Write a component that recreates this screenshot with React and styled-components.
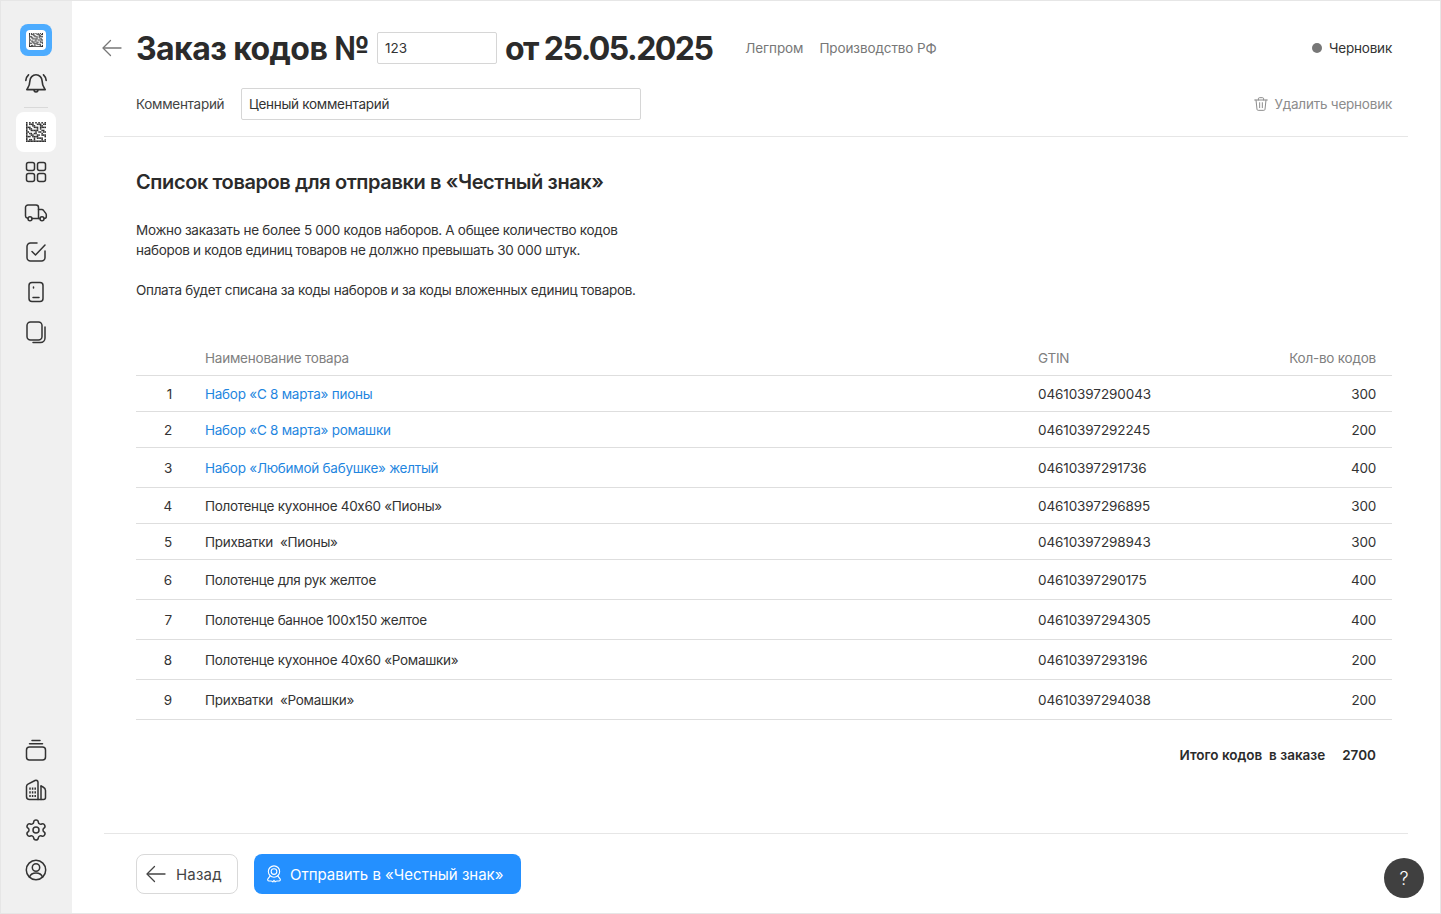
import React from 'react';
import styled, { createGlobalStyle } from 'styled-components';
import { Settings } from 'lucide-react';

const GlobalStyle = createGlobalStyle`
  html, body {
    margin: 0;
    padding: 0;
  }
  body {
    font-family: Inter, "Noto Sans", sans-serif;
    color: #2b2b2b;
    background: #fff;
  }
  * {
    box-sizing: border-box;
  }
`;

const MATRIX = [
  '1010101010101',
  '1011100111011',
  '1000110001100',
  '1110011101111',
  '1011000101000',
  '1001111100110',
  '1100001011011',
  '1011011000100',
  '1001100110111',
  '1110111100001',
  '1000010111100',
  '1011010000101',
  '1111111111111',
];

const DataMatrix = ({ size = 20, color = '#2f2f2f' }) => (
  <svg width={size} height={size} viewBox="0 0 13 13">
    {MATRIX.map((row, y) =>
      row.split('').map((cell, x) =>
        cell === '1' ? <rect key={`${x}-${y}`} x={x} y={y} width="1" height="1" fill={color} /> : null
      )
    )}
  </svg>
);

const Icon = ({ children, size = 24, weight = 1.5 }) => (
  <svg
    width={size}
    height={size}
    viewBox="0 0 24 24"
    fill="none"
    stroke="currentColor"
    strokeWidth={weight}
    strokeLinecap="round"
    strokeLinejoin="round"
  >
    {children}
  </svg>
);

const ArrowIcon = () => (
  <Icon weight={1.3}>
    <path d="M3.500 12H21" />
    <path d="M10.500 4.500 3 12l7.500 7.500" />
  </Icon>
);

const BellIcon = () => (
  <Icon size={26}>
    <path d="M12 3.500a5.600 5.600 0 0 0-5.600 5.600c0 4.400-1.700 6.400-2.900 8.100h17c-1.200-1.700-2.900-3.700-2.900-8.100A5.600 5.600 0 0 0 12 3.500z" />
    <path d="M10.200 17.400c0 2.600 3.600 2.600 3.600 0" />
    <path d="M2.600 8.600c.2-2 1.100-3.700 2.500-5M21.400 8.600c-.2-2-1.100-3.700-2.500-5" />
  </Icon>
);

const GridIcon = () => (
  <Icon>
    <rect x="2.500" y="2.500" width="8" height="8" rx="2" />
    <rect x="13.500" y="2.500" width="8" height="8" rx="2" />
    <rect x="2.500" y="13.500" width="8" height="8" rx="2" />
    <rect x="13.500" y="13.500" width="8" height="8" rx="2" />
  </Icon>
);

const TruckIcon = () => (
  <Icon>
    <g transform="translate(0 1)">
      <path d="M3.800 17.300C2.500 17 1.500 16.200 1.500 15V6.500A2.500 2.500 0 0 1 4 4h8a2.500 2.500 0 0 1 2.500 2.500v11H8" />
      <path d="M14.500 8.500h3.300c.7 0 1.300.3 1.700.9l2.300 3c.3.400.5.900.5 1.400v1.700c0 1.200-.7 2-2 2" />
      <circle cx="6" cy="17.800" r="2" />
      <circle cx="18" cy="17.800" r="2" />
      <path d="M14.500 17.500h1.500" />
    </g>
  </Icon>
);

const CheckIcon = () => (
  <Icon>
    <path d="M13 3H6.500A3.500 3.500 0 0 0 3 6.500v11A3.500 3.500 0 0 0 6.500 21h11a3.500 3.500 0 0 0 3.500-3.500V11" />
    <path d="M8 11.500l3.500 3.500L21 5" />
  </Icon>
);

const PhoneIcon = () => (
  <Icon>
    <rect x="5" y="2.500" width="14" height="19" rx="3" />
    <path d="M9 17.500h6" />
    <path d="M9.500 7v1" />
  </Icon>
);

const CopyIcon = () => (
  <Icon>
    <rect x="3" y="2" width="15" height="18" rx="3.500" />
    <path d="M21 7v11a4.500 4.500 0 0 1-4.500 4.500H9" />
  </Icon>
);

const StackIcon = () => (
  <Icon>
    <rect x="2.500" y="9" width="19" height="13" rx="3" />
    <path d="M5.500 5.800h13" />
    <path d="M8 2.500h8" />
  </Icon>
);

const BuildingIcon = () => (
  <Icon>
    <path d="M2.500 8.500c0-1 .6-1.800 1.500-2.300l7-3.700c1.300-.7 3 .2 3 1.700V21.500H5.500a3 3 0 0 1-3-3z" />
    <path d="M17 8l2 1c1.500.8 2.500 2 2.500 3.500v7a2 2 0 0 1-2 2H14" />
    <path d="M17 8v13.500" />
    <path
      strokeLinecap="butt"
      d="M6 9.500v2.200M8.600 9.500v2.200M11.200 9.500v2.200M6 13.200v2.200M8.600 13.200v2.200M11.200 13.200v2.200M6 16.900v2.200M8.600 16.900v2.200M11.200 16.900v2.200"
    />
  </Icon>
);

const UserIcon = () => (
  <Icon>
    <circle cx="12" cy="12" r="9.700" />
    <circle cx="12" cy="9.500" r="3.700" />
    <path d="M5.500 19c1-2.700 3.500-4 6.500-4s5.500 1.300 6.500 4" />
  </Icon>
);

const TrashIcon = () => (
  <Icon size={16}>
    <path d="M2.500 6h19" />
    <path d="M4.500 6l1.500 14c.1 1 .8 1.500 1.800 1.500h8.400c1 0 1.700-.5 1.800-1.500L19.500 6" />
    <path d="M8 6V4.200C8 3 8.800 2.500 10 2.500h4c1.200 0 2 .5 2 1.700V6" />
    <path d="M10 10v7.500M14 10v7.500" />
  </Icon>
);

const BadgeIcon = () => (
  <Icon size={20} weight={1.3}>
    <circle cx="12" cy="9" r="6.800" />
    <circle cx="12" cy="9" r="3.400" />
    <path d="M7.500 14.200 4.700 17.800c-.8 1.100-.1 2.500 1.200 2.500h2.300c1 0 2 .4 2.500 1.200L12 19.500l1.300 2c.5-.8 1.500-1.200 2.500-1.200h2.300c1.300 0 2-1.400 1.200-2.500l-2.800-3.600" />
  </Icon>
);

const products = [
  { id: 1, name: 'Набор «С 8 марта» пионы', gtin: '04610397290043', count: 300, link: true },
  { id: 2, name: 'Набор «С 8 марта» ромашки', gtin: '04610397292245', count: 200, link: true },
  { id: 3, name: 'Набор «Любимой бабушке» желтый', gtin: '04610397291736', count: 400, link: true, tall: true },
  { id: 4, name: 'Полотенце кухонное 40х60 «Пионы»', gtin: '04610397296895', count: 300 },
  { id: 5, name: 'Прихватки  «Пионы»', gtin: '04610397298943', count: 300 },
  { id: 6, name: 'Полотенце для рук желтое', gtin: '04610397290175', count: 400, tall: true },
  { id: 7, name: 'Полотенце банное 100х150 желтое', gtin: '04610397294305', count: 400, tall: true },
  { id: 8, name: 'Полотенце кухонное 40х60 «Ромашки»', gtin: '04610397293196', count: 200, tall: true },
  { id: 9, name: 'Прихватки  «Ромашки»', gtin: '04610397294038', count: 200, tall: true },
];

export default function App() {
  return (
    <>
      <GlobalStyle />
      <Page>
        <Sidebar>
          <SideGroup>
            <Logo>
              <LogoInner>
                <DataMatrix size={14} />
              </LogoInner>
            </Logo>
            <SideItem><BellIcon /></SideItem>
            <SideDivider />
            <SideItem $active><DataMatrix size={20} /></SideItem>
            <SideItem><GridIcon /></SideItem>
            <SideItem><TruckIcon /></SideItem>
            <SideItem><CheckIcon /></SideItem>
            <SideItem><PhoneIcon /></SideItem>
            <SideItem><CopyIcon /></SideItem>
          </SideGroup>
          <SideGroup>
            <SideItem><StackIcon /></SideItem>
            <SideItem><BuildingIcon /></SideItem>
            <SideItem><Settings size={24} strokeWidth={1.5} /></SideItem>
            <SideItem><UserIcon /></SideItem>
          </SideGroup>
        </Sidebar>

        <Main>
          <Header>
            <TitleRow>
              <BackLink><ArrowIcon /></BackLink>
              <Title>Заказ кодов №</Title>
              <NumberField value="123" readOnly />
              <Title $date>от 25.05.2025</Title>
              <Tags>
                <Tag>Легпром</Tag>
                <Tag>Производство РФ</Tag>
              </Tags>
              <Status>
                <StatusDot />
                Черновик
              </Status>
            </TitleRow>
            <CommentRow>
              <CommentLabel>Комментарий</CommentLabel>
              <CommentField value="Ценный комментарий" readOnly />
              <DeleteDraft><TrashIcon />Удалить черновик</DeleteDraft>
            </CommentRow>
          </Header>

          <Content>
            <SectionTitle>Список товаров для отправки в «Честный знак»</SectionTitle>
            <Note>
              Можно заказать не более 5 000 кодов наборов. А общее количество кодов
              <br />
              наборов и кодов единиц товаров не должно превышать 30 000 штук.
            </Note>
            <Note>Оплата будет списана за коды наборов и за коды вложенных единиц товаров.</Note>

            <Table>
              <HeadRow>
                <span />
                <span>Наименование товара</span>
                <span>GTIN</span>
                <CountCell>Кол-во кодов</CountCell>
              </HeadRow>
              {products.map((p) => (
                <Row key={p.id} $tall={p.tall}>
                  <RowNumber>{p.id}</RowNumber>
                  <RowName $link={p.link}>{p.name}</RowName>
                  <Gtin>{p.gtin}</Gtin>
                  <CountCell>{p.count}</CountCell>
                </Row>
              ))}
            </Table>

            <Total>
              <TotalLabel>Итого кодов  в заказе</TotalLabel>
              <span>2700</span>
            </Total>
          </Content>

          <Footer>
            <GhostButton><ArrowIcon />Назад</GhostButton>
            <PrimaryButton><BadgeIcon />Отправить в «Честный знак»</PrimaryButton>
          </Footer>
        </Main>

        <HelpButton>?</HelpButton>
      </Page>
    </>
  );
}

const Page = styled.div`
  position: relative;
  display: flex;
  width: 1441px;
  height: 914px;
  overflow: hidden;
  border: 1px solid #e6e6e6;
`;

const Sidebar = styled.aside`
  width: 71px;
  flex: none;
  display: flex;
  flex-direction: column;
  justify-content: space-between;
  padding: 23px 1px 23px 0;
  background: #f0f0f0;
`;

const SideGroup = styled.div`
  display: flex;
  flex-direction: column;
  align-items: center;
`;

const Logo = styled.div`
  width: 32px;
  height: 32px;
  display: flex;
  align-items: center;
  justify-content: center;
  margin-bottom: 8px;
  border-radius: 8px;
  background: #4dacff;
`;

const LogoInner = styled.div`
  width: 20px;
  height: 20px;
  display: flex;
  align-items: center;
  justify-content: center;
  border-radius: 4px;
  background: #fff;
`;

const SideItem = styled.div`
  width: 40px;
  height: 40px;
  display: flex;
  align-items: center;
  justify-content: center;
  border-radius: 8px;
  color: #333;
  background: ${(p) => (p.$active ? '#fff' : 'transparent')};
`;

const SideDivider = styled.div`
  width: 24px;
  height: 1px;
  margin: 3px 0 4px;
  background: #d9d9d9;
`;

const Main = styled.main`
  flex: 1;
  min-width: 0;
  display: flex;
  flex-direction: column;
  padding: 0 32px;
`;

const Header = styled.header`
  padding: 31px 16px 16px 0;
  border-bottom: 1px solid #e6e6e6;
`;

const TitleRow = styled.div`
  display: flex;
  align-items: center;
  height: 32px;
`;

const BackLink = styled.div`
  width: 36px;
  flex: none;
  display: flex;
  margin-left: -4px;
  color: #777;
`;

const Title = styled.h1`
  margin: 0;
  padding-top: 1px;
  font-size: 32px;
  line-height: 32px;
  font-weight: 650;
  letter-spacing: ${(p) => (p.$date ? '-1.55px' : '-0.58px')};
  white-space: nowrap;
`;

const NumberField = styled.input`
  width: 120px;
  height: 32px;
  margin: 0 8px;
  padding: 0 7px;
  border: 1px solid #d6d6d6;
  border-radius: 2px;
  outline: none;
  font: 400 13.5px Inter, sans-serif;
  color: #333;
`;

const Tags = styled.div`
  display: flex;
  gap: 16px;
  margin-left: 33px;
`;

const Tag = styled.span`
  font-size: 13.5px;
  letter-spacing: -0.1px;
  color: #777;
`;

const Status = styled.div`
  display: flex;
  align-items: center;
  gap: 7px;
  margin-left: auto;
  font-size: 13.5px;
  letter-spacing: -0.2px;
  color: #333;
`;

const StatusDot = styled.span`
  width: 10px;
  height: 10px;
  border-radius: 50%;
  background: #777;
`;

const CommentRow = styled.div`
  display: flex;
  align-items: center;
  margin-top: 24px;
  padding-left: 32px;
`;

const CommentLabel = styled.span`
  width: 105px;
  font-size: 13.5px;
  letter-spacing: -0.28px;
  color: #444;
`;

const CommentField = styled.input`
  width: 400px;
  height: 32px;
  padding: 0 7px;
  border: 1px solid #d6d6d6;
  border-radius: 2px;
  outline: none;
  font: 400 13.5px Inter, sans-serif;
  letter-spacing: -0.28px;
  color: #333;
`;

const DeleteDraft = styled.div`
  display: flex;
  align-items: center;
  gap: 5px;
  margin-left: auto;
  font-size: 13.5px;
  letter-spacing: -0.22px;
  color: #8c8c8c;
`;

const Content = styled.section`
  flex: 1;
  padding: 31px 16px 0 32px;
`;

const SectionTitle = styled.h2`
  margin: 0 0 24px;
  font-size: 20px;
  line-height: 28px;
  font-weight: 600;
  letter-spacing: -0.4px;
`;

const Note = styled.p`
  margin: 0 0 20px;
  font-size: 13.5px;
  line-height: 20px;
  letter-spacing: -0.3px;
  color: #333;
`;

const Table = styled.div`
  margin-top: 40px;
  font-size: 13.5px;
  letter-spacing: -0.22px;
  color: #333;
`;

const Columns = styled.div`
  display: grid;
  grid-template-columns: 69px 833px 1fr 120px;
  align-items: center;
  border-bottom: 1px solid #dedede;
`;

const HeadRow = styled(Columns)`
  height: 36px;
  color: #808080;
`;

const Row = styled(Columns)`
  height: ${(p) => (p.$tall ? '40px' : '36px')};
`;

const RowNumber = styled.span`
  padding-right: 33px;
  text-align: right;
`;

const RowName = styled.span`
  white-space: pre;
  letter-spacing: ${(p) => (p.$link ? '-0.25px' : '-0.3px')};
  color: ${(p) => (p.$link ? '#1f86e0' : '#333')};
`;

const Gtin = styled.span`
  letter-spacing: -0.1px;
`;

const CountCell = styled.span`
  padding-right: 16px;
  text-align: right;
`;

const Total = styled.div`
  display: flex;
  justify-content: flex-end;
  gap: 17px;
  margin-top: 25px;
  padding-right: 16px;
  font-size: 13.5px;
  line-height: 20px;
  font-weight: 600;
`;

const TotalLabel = styled.span`
  white-space: pre;
`;

const Footer = styled.footer`
  height: 80px;
  display: flex;
  gap: 16px;
  padding: 20px 0 0 32px;
  border-top: 1px solid #e6e6e6;
`;

const GhostButton = styled.button`
  width: 102px;
  height: 40px;
  display: flex;
  align-items: center;
  gap: 8px;
  padding: 0 0 0 7px;
  border: 1px solid #d9d9d9;
  border-radius: 8px;
  background: #fff;
  font: 400 15px Inter, sans-serif;
  letter-spacing: 0.2px;
  color: #444;
`;

const PrimaryButton = styled.button`
  height: 40px;
  display: flex;
  align-items: center;
  gap: 6px;
  padding: 0 18px 0 10px;
  border: 0;
  border-radius: 8px;
  background: #2490ff;
  font: 400 15px Inter, sans-serif;
  color: #fff;
`;

const HelpButton = styled.div`
  position: absolute;
  right: 16px;
  bottom: 15px;
  width: 40px;
  height: 40px;
  display: flex;
  align-items: center;
  justify-content: center;
  border-radius: 50%;
  background: #404040;
  font-size: 18px;
  font-weight: 300;
  color: #fff;
`;
